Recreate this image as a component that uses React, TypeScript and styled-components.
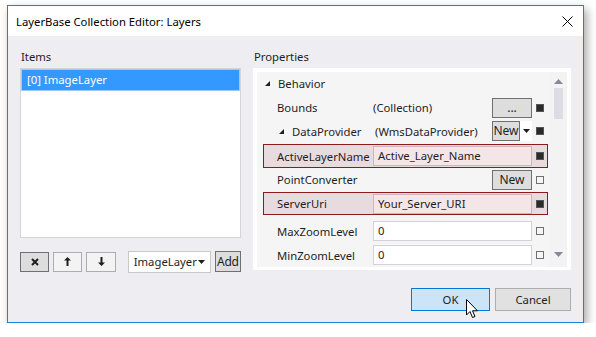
import React from 'react';
import styled, { createGlobalStyle } from 'styled-components';

const GlobalStyle = createGlobalStyle`
  body {
    margin: 0;
    background: #ffffff;
    font-family: "Segoe UI", "Noto Sans", "Open Sans", sans-serif;
    font-size: 11.3px;
    color: #1e1e1e;
  }
`;

const Page = styled.div`
  padding: 5px 0 0 7px;
`;

const Window = styled.div`
  width: 577px;
  box-sizing: border-box;
  border: 1px solid #1883d7;
  background: #eeeef2;
  box-shadow: 3px 4px 9px rgba(0, 0, 0, 0.35);
`;

const TitleBar = styled.div`
  height: 30px;
  background: #ffffff;
  display: flex;
  align-items: center;
  justify-content: space-between;
  padding: 0 10px 0 8px;
  font-size: 11.3px;
  color: #000;
`;

const Body = styled.div`
  padding: 13px 12px 11px 12px;
`;

const Main = styled.div`
  display: grid;
  grid-template-columns: 221px 1fr;
  column-gap: 12px;
`;

const Column = styled.div`
  display: flex;
  flex-direction: column;
`;

const Label = styled.div`
  height: 16px;
  line-height: 16px;
  margin-bottom: 3px;
  padding-left: 1px;
`;

const ListBox = styled.div`
  height: 170px;
  box-sizing: border-box;
  border: 1px solid #d4d4da;
  background: #ffffff;
`;

const ListItem = styled.div`
  height: 22px;
  box-sizing: border-box;
  border: 1px solid #9ec9f5;
  background: #3399ff;
  color: #ffffff;
  line-height: 20px;
  padding-left: 5px;
`;

const Toolbar = styled.div`
  margin-top: 13px;
  height: 21px;
  display: flex;
  align-items: center;
`;

const ToolButton = styled.div<{ $pressed?: boolean; $gap?: number }>`
  width: 30px;
  height: 20px;
  box-sizing: border-box;
  margin-right: ${(p) => p.$gap ?? 4}px;
  border: 1px solid ${(p) => (p.$pressed ? '#707070' : '#adadad')};
  background: ${(p) => (p.$pressed ? '#dddddd' : '#f3f3f3')};
  display: flex;
  align-items: center;
  justify-content: center;
`;

const Combo = styled.div`
  width: 85px;
  height: 22px;
  box-sizing: border-box;
  border: 1px solid #c8c8c8;
  background: #ffffff;
  display: flex;
  align-items: center;
  justify-content: space-between;
  padding: 0 5px 0 5px;
  margin-right: 4px;
`;

const AddButton = styled.div`
  width: 27px;
  height: 21px;
  box-sizing: border-box;
  border: 1px solid #707070;
  background: #dddddd;
  display: flex;
  align-items: center;
  justify-content: center;
  font-size: 12px;
  letter-spacing: -0.3px;
`;

const GridFrame = styled.div`
  height: 202px;
  box-sizing: border-box;
  background: #ffffff;
  padding: 4px 4px 3px 4px;
  display: flex;
`;

const GridContent = styled.div`
  flex: 1;
  background: #f5f5f5;
  overflow: hidden;
  display: flex;
  flex-direction: column;
`;

const ScrollBar = styled.div`
  width: 18px;
  background: #f3f3f3;
  display: flex;
  flex-direction: column;
  align-items: center;
  padding-top: 7px;
  box-sizing: border-box;
  position: relative;
`;

const Thumb = styled.div`
  width: 9px;
  height: 31px;
  background: #dcdce4;
  margin-top: 4px;
`;

const DownArrow = styled.div`
  position: absolute;
  bottom: 7px;
  left: 5px;
`;

const CategoryRow = styled.div`
  height: 24px;
  display: flex;
  align-items: center;
  padding-left: 8px;
  gap: 8px;
`;

const Row = styled.div<{ $highlight?: boolean; $gapAfter?: number }>`
  height: 24px;
  margin: 0 1px ${(p) => p.$gapAfter ?? 0}px 6px;
  box-sizing: border-box;
  border: 1px solid ${(p) => (p.$highlight ? '#8e1b1b' : 'transparent')};
  background: ${(p) => (p.$highlight ? '#e8dbde' : 'transparent')};
  display: flex;
  align-items: center;
`;

const NameCell = styled.div<{ $indent?: number }>`
  width: 109px;
  box-sizing: border-box;
  padding-left: ${(p) => p.$indent ?? 13}px;
  display: flex;
  align-items: center;
  gap: 8px;
  white-space: nowrap;
`;

const ValueCell = styled.div<{ $end?: boolean }>`
  width: 159px;
  height: 100%;
  display: flex;
  align-items: center;
  justify-content: ${(p) => (p.$end ? 'flex-end' : 'space-between')};
`;

const ValueText = styled.span<{ $offset?: number }>`
  padding-left: ${(p) => p.$offset ?? 0}px;
`;

const TextBox = styled.div<{ $tint?: boolean }>`
  width: 159px;
  height: 20px;
  box-sizing: border-box;
  border: 1px solid ${(p) => (p.$tint ? '#c9b7bb' : '#d2d2da')};
  background: ${(p) => (p.$tint ? '#f4e6e6' : '#ffffff')};
  line-height: 18px;
  padding-left: 4px;
`;

const GrayButton = styled.div<{ $width: number }>`
  width: ${(p) => p.$width}px;
  height: 20px;
  box-sizing: border-box;
  border: 1px solid #707070;
  background: #dddddd;
  display: flex;
  align-items: center;
  justify-content: center;
  line-height: 1;
  font-size: 12px;
`;

const DropPart = styled.div`
  width: 12px;
  height: 20px;
  background: #ffffff;
  display: flex;
  align-items: center;
  justify-content: center;
`;

const SplitButton = styled.div`
  display: flex;
`;

const MarkerCell = styled.div`
  flex: 1;
  display: flex;
  align-items: center;
  justify-content: center;
`;

const Marker = styled.div<{ $filled?: boolean }>`
  width: 8px;
  height: 8px;
  box-sizing: border-box;
  border: 1px solid ${(p) => (p.$filled ? '#555555' : '#6f6f6f')};
  background: ${(p) => (p.$filled ? '#2b2b2b' : 'transparent')};
`;

const Footer = styled.div`
  margin-top: 16px;
  display: flex;
  justify-content: flex-end;
  gap: 5px;
`;

const DialogButton = styled.div<{ $primary?: boolean; $width: number }>`
  position: relative;
  width: ${(p) => p.$width}px;
  height: 23px;
  box-sizing: border-box;
  border: 1px solid ${(p) => (p.$primary ? '#0078d7' : '#adadad')};
  background: ${(p) => (p.$primary ? '#cce4f7' : '#e1e1e1')};
  display: flex;
  align-items: center;
  justify-content: center;
`;

const Cursor = styled.svg`
  position: absolute;
  left: 54px;
  top: 10px;
`;

const Corner = () => (
  <svg width="5" height="5" viewBox="0 0 5 5">
    <polygon points="5,0 5,5 0,5" fill="#1e1e1e" />
  </svg>
);

const Caret = () => (
  <svg width="7" height="4" viewBox="0 0 7 4">
    <polygon points="0,0 7,0 3.5,4" fill="#1e1e1e" />
  </svg>
);

const CloseIcon = () => (
  <svg width="11" height="11" viewBox="0 0 11 11">
    <path d="M0.5 0.5 L10.5 10.5 M10.5 0.5 L0.5 10.5" stroke="#000" strokeWidth="1" />
  </svg>
);

const DeleteIcon = () => (
  <svg width="8" height="8" viewBox="0 0 8 8">
    <path d="M1 1 L7 7 M7 1 L1 7" stroke="#1e1e1e" strokeWidth="2" />
  </svg>
);

const ArrowIcon = ({ down }: { down?: boolean }) => (
  <svg width="7" height="9" viewBox="0 0 7 9" style={down ? { transform: 'rotate(180deg)' } : undefined}>
    <path d="M3.5 0 L7 3.5 L4.5 3.5 L4.5 9 L2.5 9 L2.5 3.5 L0 3.5 Z" fill="#1e1e1e" />
  </svg>
);

const ScrollArrow = ({ down }: { down?: boolean }) => (
  <svg width="9" height="5" viewBox="0 0 9 5">
    <polygon points={down ? '0,0 9,0 4.5,5' : '0,5 9,5 4.5,0'} fill="#868999" />
  </svg>
);

const App = () => {
  return (
    <Page>
      <GlobalStyle />
      <Window>
        <TitleBar>
          <span>LayerBase Collection Editor: Layers</span>
          <CloseIcon />
        </TitleBar>
        <Body>
          <Main>
            <Column>
              <Label>Items</Label>
              <ListBox>
                <ListItem>[0] ImageLayer</ListItem>
              </ListBox>
              <Toolbar>
                <ToolButton $pressed>
                  <DeleteIcon />
                </ToolButton>
                <ToolButton>
                  <ArrowIcon />
                </ToolButton>
                <ToolButton $gap={12}>
                  <ArrowIcon down />
                </ToolButton>
                <Combo>
                  <span>ImageLayer</span>
                  <Caret />
                </Combo>
                <AddButton>Add</AddButton>
              </Toolbar>
            </Column>
            <Column>
              <Label>Properties</Label>
              <GridFrame>
                <GridContent>
                  <CategoryRow>
                    <Corner />
                    <span>Behavior</span>
                  </CategoryRow>
                  <Row>
                    <NameCell>Bounds</NameCell>
                    <ValueCell>
                      <ValueText>(Collection)</ValueText>
                      <GrayButton $width={40}>...</GrayButton>
                    </ValueCell>
                    <MarkerCell>
                      <Marker $filled />
                    </MarkerCell>
                  </Row>
                  <Row $gapAfter={1}>
                    <NameCell $indent={15}>
                      <Corner />
                      <span>DataProvider</span>
                    </NameCell>
                    <ValueCell>
                      <ValueText $offset={2}>(WmsDataProvider)</ValueText>
                      <SplitButton>
                        <GrayButton $width={28}>New</GrayButton>
                        <DropPart>
                          <Caret />
                        </DropPart>
                      </SplitButton>
                    </ValueCell>
                    <MarkerCell>
                      <Marker $filled />
                    </MarkerCell>
                  </Row>
                  <Row $highlight>
                    <NameCell>ActiveLayerName</NameCell>
                    <TextBox $tint>Active_Layer_Name</TextBox>
                    <MarkerCell>
                      <Marker $filled />
                    </MarkerCell>
                  </Row>
                  <Row>
                    <NameCell>PointConverter</NameCell>
                    <ValueCell $end>
                      <GrayButton $width={40}>New</GrayButton>
                    </ValueCell>
                    <MarkerCell>
                      <Marker />
                    </MarkerCell>
                  </Row>
                  <Row $highlight $gapAfter={4}>
                    <NameCell>ServerUri</NameCell>
                    <TextBox $tint>Your_Server_URI</TextBox>
                    <MarkerCell>
                      <Marker $filled />
                    </MarkerCell>
                  </Row>
                  <Row>
                    <NameCell>MaxZoomLevel</NameCell>
                    <TextBox>0</TextBox>
                    <MarkerCell>
                      <Marker />
                    </MarkerCell>
                  </Row>
                  <Row>
                    <NameCell>MinZoomLevel</NameCell>
                    <TextBox>0</TextBox>
                    <MarkerCell>
                      <Marker />
                    </MarkerCell>
                  </Row>
                </GridContent>
                <ScrollBar>
                  <ScrollArrow />
                  <Thumb />
                  <DownArrow>
                    <ScrollArrow down />
                  </DownArrow>
                </ScrollBar>
              </GridFrame>
            </Column>
          </Main>
          <Footer>
            <DialogButton $primary $width={79}>
              OK
              <Cursor width="13" height="20" viewBox="0 0 13 20">
                <path
                  d="M0.5 0.5 L0.5 16 L4 12.5 L6.5 18.5 L9 17.5 L6.5 11.8 L11.5 11.8 Z"
                  fill="#ffffff"
                  stroke="#000000"
                  strokeWidth="1"
                  strokeLinejoin="round"
                />
              </Cursor>
            </DialogButton>
            <DialogButton $width={76}>Cancel</DialogButton>
          </Footer>
        </Body>
      </Window>
    </Page>
  );
};

export default App;
